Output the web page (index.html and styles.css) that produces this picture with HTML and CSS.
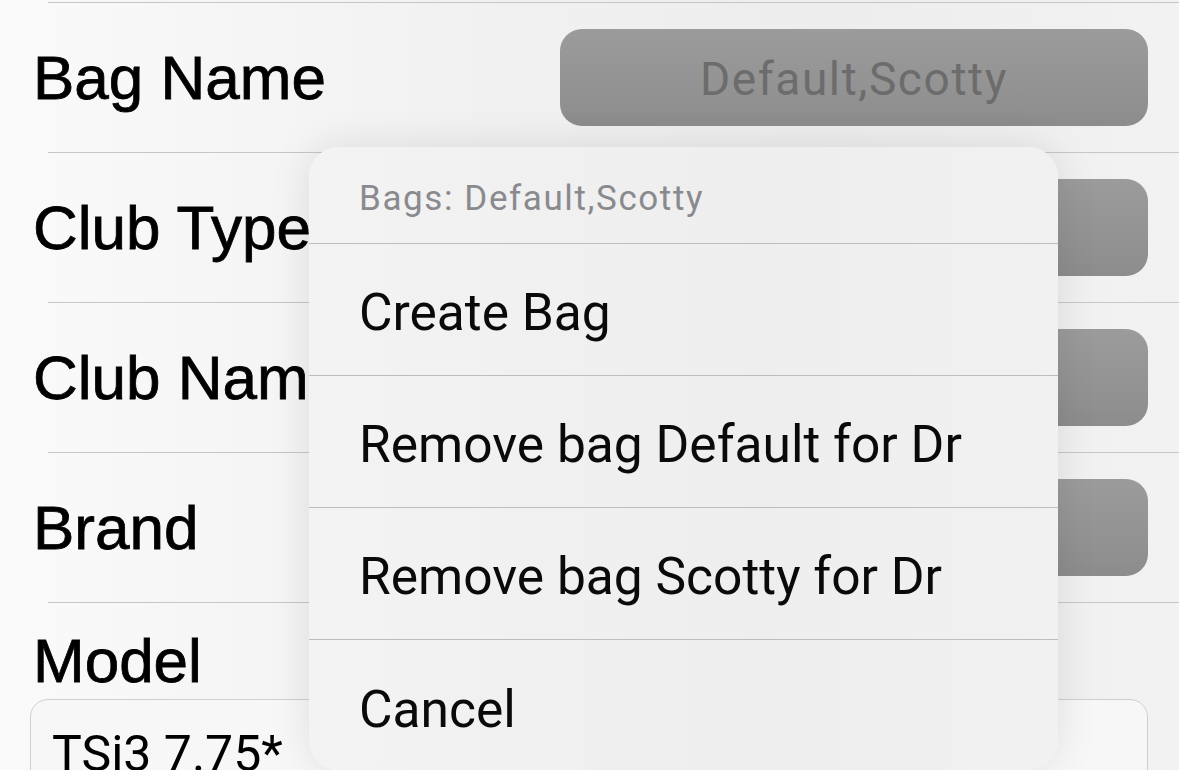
FILE: index.html
```html
<!DOCTYPE html>
<html>
<head>
<meta charset="utf-8">
<link rel="stylesheet" href="styles.css">
</head>
<body>
<div class="screen">
  <div class="form">
    <div class="sep"></div>
    <div class="row">
      <div class="label">Bag Name</div>
      <div class="btn"><span>Default,Scotty</span></div>
    </div>
    <div class="sep"></div>
    <div class="row">
      <div class="label">Club Type</div>
      <div class="btn"></div>
    </div>
    <div class="sep"></div>
    <div class="row">
      <div class="label">Club Name</div>
      <div class="btn"></div>
    </div>
    <div class="sep"></div>
    <div class="row">
      <div class="label">Brand</div>
      <div class="btn"></div>
    </div>
    <div class="sep"></div>
    <div class="model">
      <div class="label">Model</div>
      <div class="field">TSi3 7.75*</div>
    </div>
  </div>

  <div class="menu">
    <div class="menu-head">Bags: Default,Scotty</div>
    <div class="menu-item">Create Bag</div>
    <div class="menu-item">Remove bag Default for Dr</div>
    <div class="menu-item">Remove bag Scotty for Dr</div>
    <div class="menu-item">Cancel</div>
  </div>
</div>
</body>
</html>
```
FILE: styles.css
```css
html, body {
  margin: 0;
  padding: 0;
}
body {
  width: 1179px;
  height: 770px;
  overflow: hidden;
  font-family: "Liberation Sans", Arial, sans-serif;
}
.screen {
  position: relative;
  width: 1179px;
  height: 770px;
  overflow: hidden;
  background: linear-gradient(90deg, #fafafa 0%, #f1f1f1 40%, #ededed 70%, #f2f2f2 100%);
}
.form {
  padding-top: 2px;
}
.sep {
  height: 1px;
  margin-left: 48px;
  background: #c6c6c6;
}
.row {
  display: flex;
  align-items: center;
  height: 149px;
  padding-left: 33px;
  padding-right: 31px;
}
.label {
  font-size: 62px;
  color: #000;
  white-space: nowrap;
  -webkit-text-stroke: 0.8px #000;
}
.btn {
  margin-left: auto;
  width: 588px;
  height: 97px;
  border-radius: 22px;
  background: linear-gradient(180deg, #9b9b9b 0%, #939393 60%, #8c8c8c 100%);
  display: flex;
  align-items: center;
  justify-content: center;
}
.btn span {
  font-family: Roboto, "Noto Sans", sans-serif;
  font-size: 46px;
  letter-spacing: 1.6px;
  color: #6c6c6c;
  padding-top: 2px;
}
.model {
  padding-left: 30px;
  padding-right: 31px;
}
.model .label {
  padding-left: 3px;
  padding-top: 22px;
  line-height: 72px;
}
.field {
  margin-top: 2px;
  height: 100px;
  border: 1px solid #cfcfcf;
  border-radius: 18px;
  background: #f7f7f7;
  padding-left: 21px;
  padding-top: 6px;
  box-sizing: border-box;
  font-family: Roboto, "Noto Sans", sans-serif;
  font-size: 50px;
  line-height: 96px;
  color: #000;
}
.menu {
  position: absolute;
  left: 309px;
  top: 147px;
  width: 749px;
  height: 623px;
  border-radius: 30px;
  background: linear-gradient(90deg, #f3f3f3 0%, #eeeeee 60%, #f1f1f1 100%);
  box-shadow: 0 0 40px rgba(0, 0, 0, 0.10);
  overflow: hidden;
  font-family: Roboto, "Noto Sans", sans-serif;
}
.menu-head {
  height: 97px;
  padding-left: 50px;
  display: flex;
  align-items: center;
  font-size: 35px;
  letter-spacing: 1.6px;
  color: #8a8a8e;
  box-sizing: border-box;
  padding-top: 6px;
  border-bottom: 1px solid #bdbdbd;
}
.menu-item {
  height: 132px;
  padding-left: 50px;
  display: flex;
  align-items: center;
  font-size: 51.5px;
  color: #0a0a0a;
  padding-top: 6px;
  box-sizing: border-box;
  border-bottom: 1px solid #bdbdbd;
}
.menu-item:last-child {
  border-bottom: none;
}
```
